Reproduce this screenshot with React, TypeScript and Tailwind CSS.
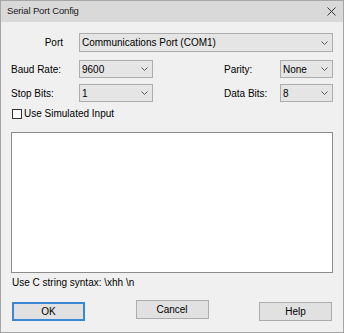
const font = { fontFamily: '"Liberation Sans", Arial, sans-serif' }

function Chevron() {
  return (
    <svg width="7" height="4" viewBox="0 0 7 4" className="shrink-0">
      <path d="M0.5 0.5 L3.5 3.5 L6.5 0.5" fill="none" stroke="#5a5a5a" strokeWidth="1" />
    </svg>
  )
}

function Select({ value, className }: { value: string; className: string }) {
  return (
    <div
      className={`flex items-center justify-between border border-[#adadad] bg-[#e5e5e5] pl-[2px] pr-[4px] text-[10px] text-black ${className}`}
    >
      <span className="whitespace-nowrap">{value}</span>
      <Chevron />
    </div>
  )
}

function Button({ label, primary }: { label: string; primary?: boolean }) {
  return (
    <div
      className={`flex h-[19px] w-[73px] items-center justify-center bg-[#e1e1e1] text-[10px] text-black ${
        primary ? 'border-2 border-[#3d86d3]' : 'border border-[#adadad]'
      }`}
    >
      {label}
    </div>
  )
}

export default function App() {
  return (
    <div
      style={font}
      className="flex h-[333px] w-[344px] flex-col border border-[#a6a6a6] bg-[#f0f0f0] text-black"
    >
      {/* title bar */}
      <div className="flex h-[21px] shrink-0 items-center justify-between bg-[#d9d9d9] pl-[6px] pr-[7px]">
        <span className="text-[9.5px] tracking-[-0.15px] text-[#1a1a1a]">Serial Port Config</span>
        <svg width="9" height="9" viewBox="0 0 9 9">
          <path d="M0.5 0.5 L8.5 8.5 M8.5 0.5 L0.5 8.5" stroke="#333" strokeWidth="1" />
        </svg>
      </div>

      <div className="flex flex-1 flex-col px-[10px]">
        {/* port */}
        <div className="mt-[11px] flex items-center">
          <span className="w-[68px] pr-[16px] text-right text-[10px]">Port</span>
          <Select value="Communications Port (COM1)" className="h-[19px] flex-1" />
        </div>

        {/* baud / parity */}
        <div className="mt-[8px] flex items-center">
          <span className="w-[68px] text-[10px]">Baud Rate:</span>
          <Select value="9600" className="h-[18px] w-[74px]" />
          <span className="ml-[71px] w-[56px] text-[10px]">Parity:</span>
          <Select value="None" className="h-[18px] w-[53px]" />
        </div>

        {/* stop / data bits */}
        <div className="mt-[6px] flex items-center">
          <span className="w-[68px] text-[10px]">Stop Bits:</span>
          <Select value="1" className="h-[18px] w-[74px]" />
          <span className="ml-[71px] w-[56px] text-[10px]">Data Bits:</span>
          <Select value="8" className="h-[18px] w-[53px]" />
        </div>

        {/* checkbox */}
        <div className="mt-[5px] flex h-[13px] items-center pl-[1px]">
          <div className="h-[10px] w-[10px] border border-[#333] bg-white" />
          <span className="ml-[2px] text-[10px]">Use Simulated Input</span>
        </div>

        {/* input area */}
        <div className="mt-[12px] h-[141px] border border-[#8c8c8c] bg-white" />

        <p className="mt-[3px] pl-[1px] text-[10px] leading-[14px]">Use C string syntax: \xhh \n</p>

        {/* buttons */}
        <div className="mt-[10px] flex items-start justify-between px-[1px]">
          <div className="mt-[2px]">
            <Button label="OK" primary />
          </div>
          <Button label="Cancel" />
          <div className="mt-[2px]">
            <Button label="Help" />
          </div>
        </div>
      </div>
    </div>
  )
}
